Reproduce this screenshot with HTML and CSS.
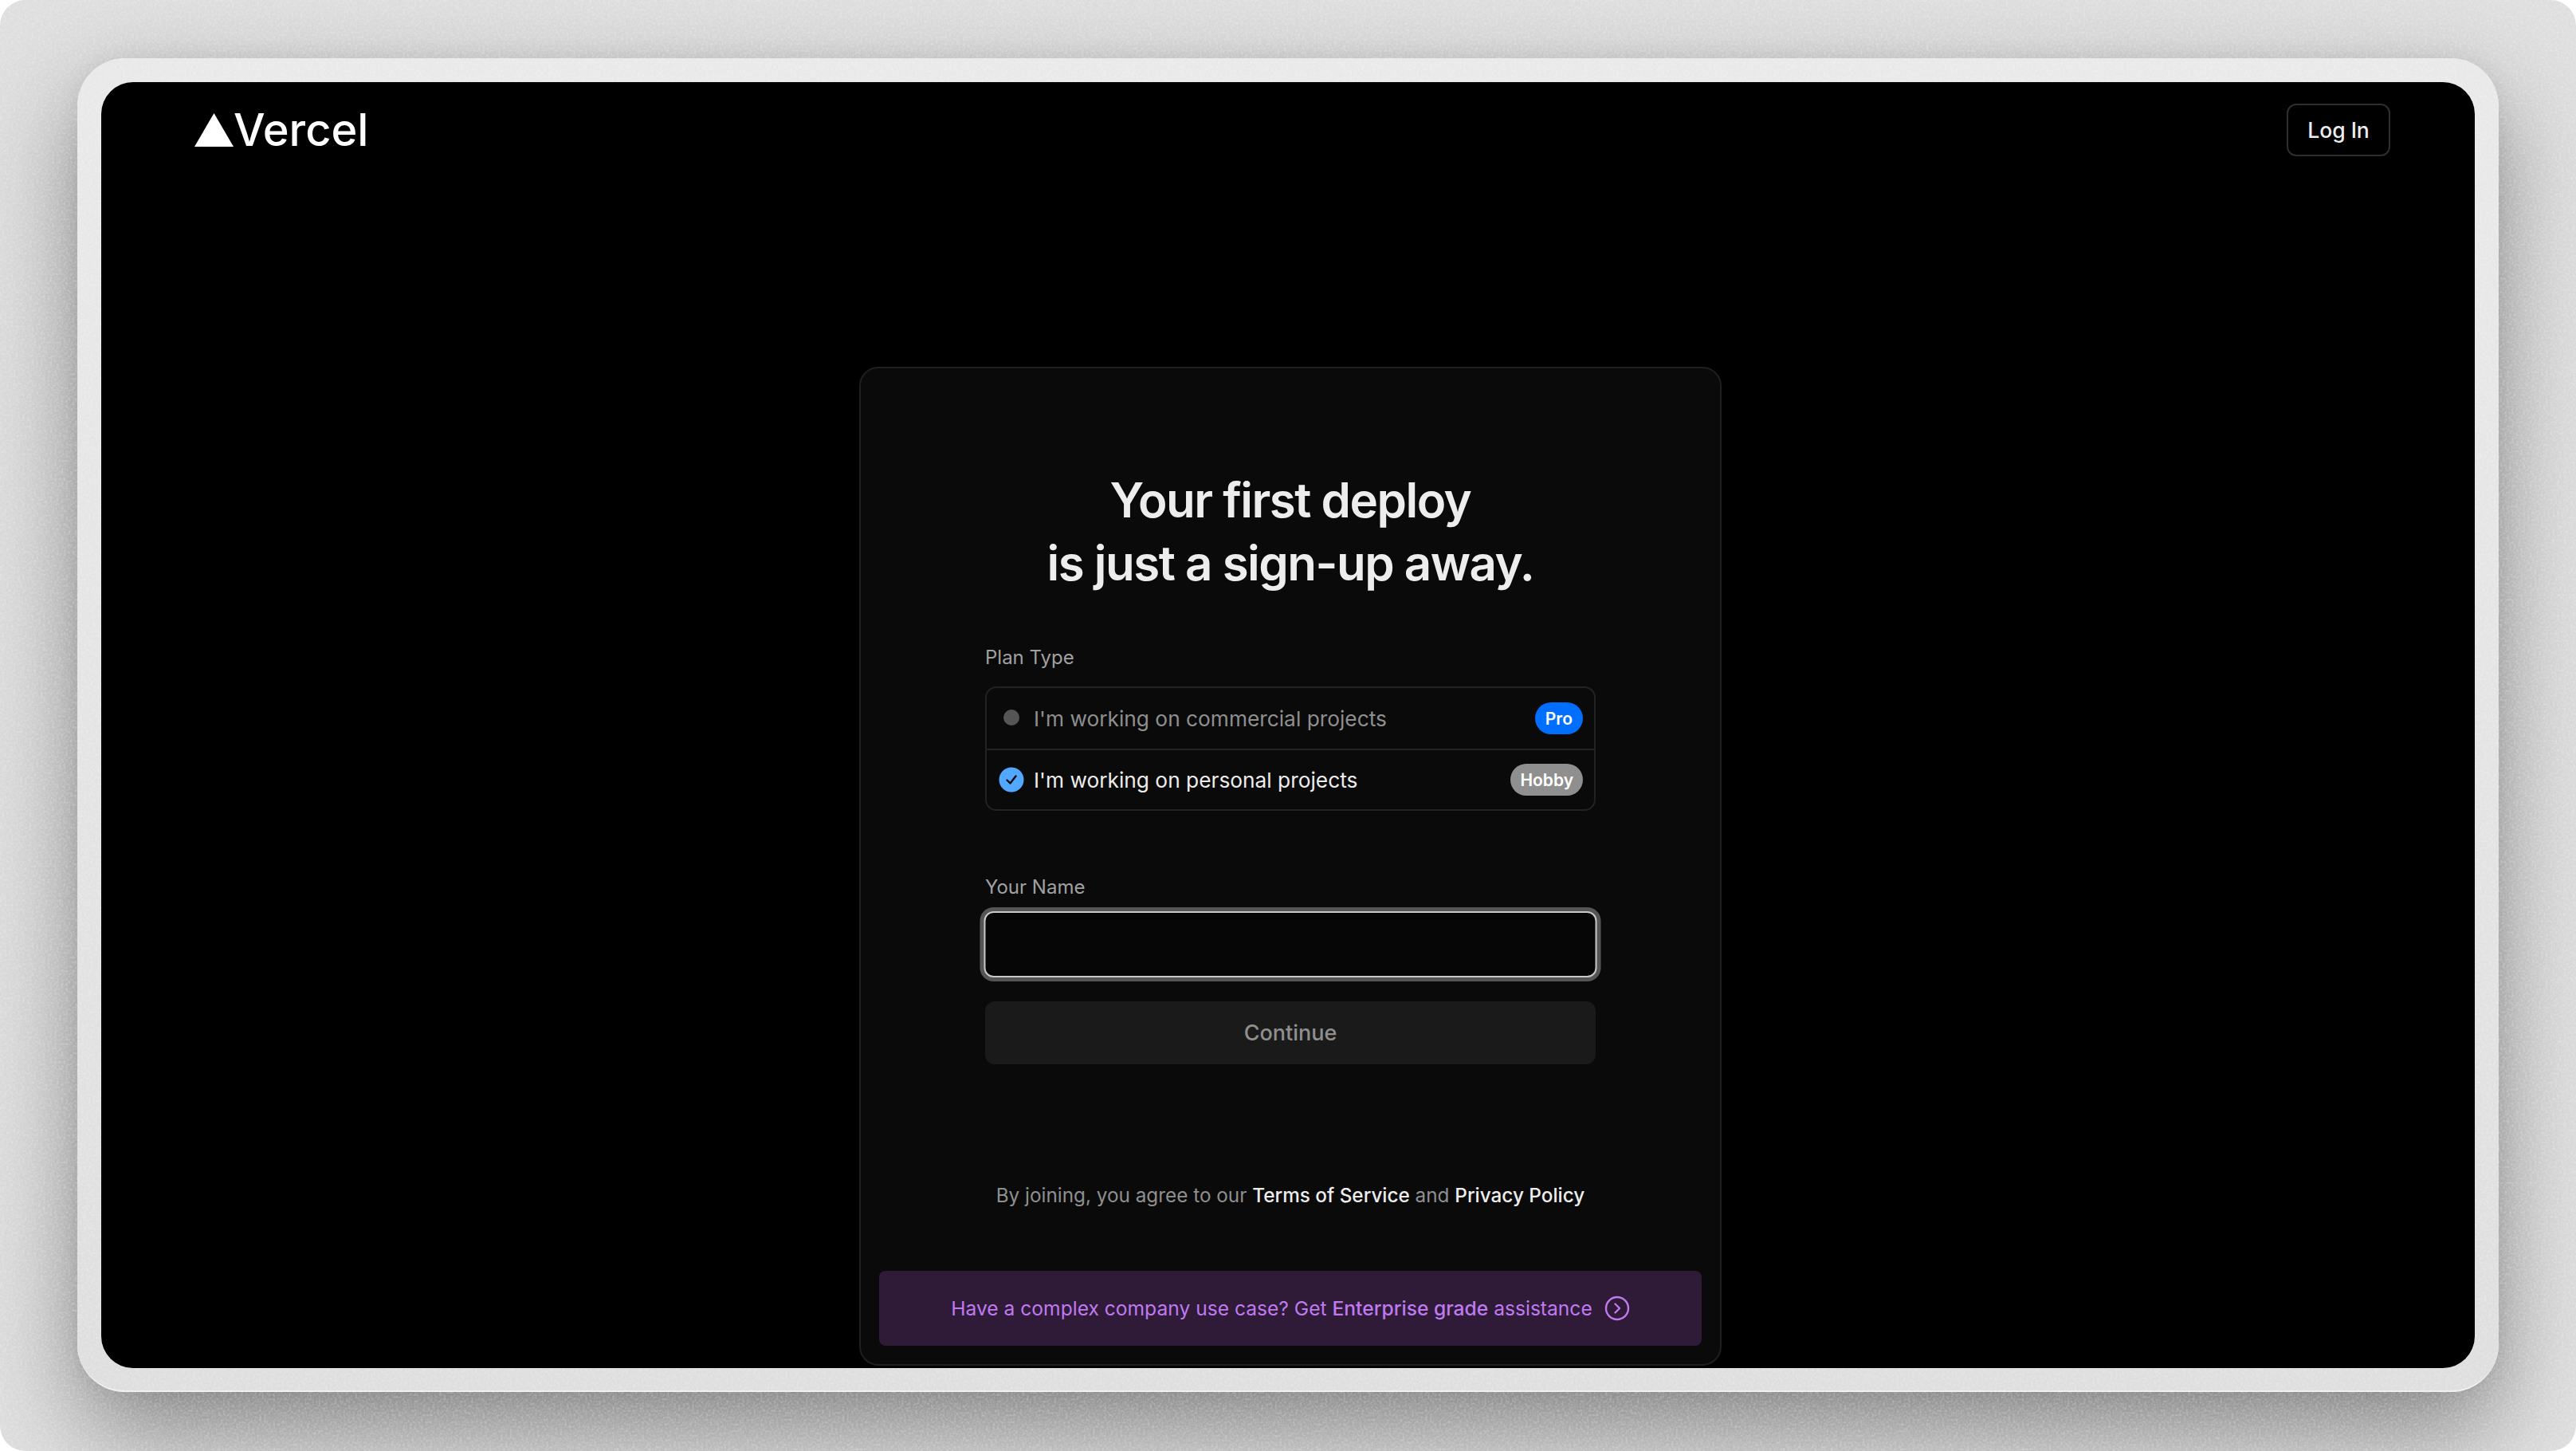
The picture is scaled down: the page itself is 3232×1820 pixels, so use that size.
FILE: index.html
```html
<!DOCTYPE html>
<html lang="en">
<head>
<meta charset="utf-8">
<title>Vercel Sign Up</title>
<link rel="stylesheet" href="styles.css">
</head>
<body>
<div class="stage">
  <svg class="grain" aria-hidden="true">
    <filter id="noise"><feTurbulence type="fractalNoise" baseFrequency="0.35" numOctaves="3" seed="4"/><feColorMatrix type="matrix" values="0 0 0 0 1  0 0 0 0 1  0 0 0 0 1  1.6 0 0 0 -0.62"/></filter>
    <rect width="100%" height="100%" filter="url(#noise)"/>
  </svg>
  <div class="frame">
    <div class="screen">
      <header class="topbar">
        <a class="brand">
          <svg class="brand-mark" viewBox="0 0 49 42"><polygon points="24.5,0 49,42 0,42" fill="#fff"/></svg>
          <span class="brand-name">Vercel</span>
        </a>
        <a class="login">Log In</a>
      </header>
      <main class="main">
        <section class="card">
          <h1 class="title">Your first deploy<br>is just a sign-up away.</h1>
          <div class="form">
            <div class="field-label plan-label">Plan Type</div>
            <div class="plans">
              <div class="plan plan-muted">
                <span class="plan-icon"><span class="dot"></span></span>
                <span class="plan-text">I'm working on commercial projects</span>
                <span class="badge badge-pro">Pro</span>
              </div>
              <div class="plan">
                <span class="plan-icon">
                  <svg class="check" viewBox="0 0 32 32"><circle cx="16" cy="16" r="15.5" fill="#52a8ff"/><path d="M10.5 16.5l4 4 7-9" fill="none" stroke="#0a0a0a" stroke-width="2.4" stroke-linecap="round" stroke-linejoin="round"/></svg>
                </span>
                <span class="plan-text">I'm working on personal projects</span>
                <span class="badge badge-hobby">Hobby</span>
              </div>
            </div>
            <label class="field-label name-label" for="name">Your Name</label>
            <input class="name-input" id="name" type="text">
            <button class="continue" type="button">Continue</button>
          </div>
          <p class="legal">By joining, you agree to our <a>Terms of Service</a> and <a>Privacy Policy</a></p>
          <div class="banner">
            <span>Have a complex company use case? Get <b>Enterprise grade</b> assistance</span>
            <svg class="banner-icon" viewBox="0 0 32 32"><circle cx="16" cy="16" r="14" fill="none" stroke="#bf7af0" stroke-width="2.4"/><path d="M13.5 10.5l5.5 5.5-5.5 5.5" fill="none" stroke="#bf7af0" stroke-width="2.4" stroke-linecap="round" stroke-linejoin="round"/></svg>
          </div>
        </section>
      </main>
    </div>
  </div>
</div>
</body>
</html>
```
FILE: styles.css
```css
* { box-sizing: border-box; }
html, body { margin: 0; height: 100%; background: #fff; }
body { font-family: Inter, "Liberation Sans", sans-serif; }
a { color: inherit; text-decoration: none; }

.stage {
  position: relative;
  isolation: isolate;
  width: 3232px;
  height: 1820px;
  padding: 73px 97px 74px 97px;
  border-radius: 32px;
  overflow: hidden;
  background: #dedede;
}
.grain {
  position: absolute;
  inset: 0;
  width: 100%;
  height: 100%;
  z-index: 1;
  opacity: .35;
  pointer-events: none;
}
.frame {
  height: 1673px;
  padding: 30px 30px 28px 30px;
  border-radius: 60px;
  background: linear-gradient(#e9e9e9, #dedede);
  border-bottom: 2px solid #efefef;
  box-shadow: 0 50px 120px rgba(0, 0, 0, .42), 0 0 30px rgba(0, 0, 0, .06);
}
.screen {
  position: relative;
  z-index: 2;
  height: 100%;
  border-radius: 40px;
  background: #000;
  overflow: hidden;
  display: flex;
  flex-direction: column;
}
.topbar {
  display: flex;
  justify-content: space-between;
  align-items: center;
  padding: 27px 106px 0 117px;
}
.brand { display: flex; align-items: center; color: #fff; }
.brand-mark { width: 49px; height: 42px; }
.brand-name {
  font-size: 56px;
  line-height: 66px;
  font-weight: 500;
}
.login {
  width: 130px;
  height: 66px;
  display: flex;
  align-items: center;
  justify-content: center;
  border: 2px solid #2e2e2e;
  border-radius: 12px;
  color: #ededed;
  font-size: 26.5px;
  font-weight: 500;
}
.main {
  display: flex;
  justify-content: center;
  padding: 264px 0 0 6px;
}
.card {
  width: 1082px;
  height: 1253px;
  padding: 0 23px;
  border: 2px solid #1f1f1f;
  border-radius: 24px;
  background: #0a0a0a;
  display: flex;
  flex-direction: column;
}
.title {
  margin: 126px 0 0;
  text-align: center;
  color: #ededed;
  font-size: 60px;
  line-height: 79px;
  font-weight: 600;
  letter-spacing: -1.5px;
}
.form {
  display: flex;
  flex-direction: column;
  padding: 0 133px;
}
.field-label {
  display: block;
  color: #a1a1a1;
  font-size: 24px;
  line-height: 30px;
}
.plan-label { margin-top: 64px; }
.name-label { margin-top: 81px; }
.plans {
  margin-top: 21px;
  border: 2px solid #222;
  border-radius: 14px;
}
.plan {
  height: 76px;
  display: flex;
  align-items: center;
  padding: 0 14px 0 15px;
  color: #ededed;
  font-size: 26.3px;
}
.plan + .plan { border-top: 2px solid #222; }
.plan-muted { color: #8f8f8f; }
.plan-icon {
  width: 32px;
  height: 32px;
  margin-right: 12px;
  display: flex;
  align-items: center;
  justify-content: center;
}
.dot { width: 20px; height: 20px; margin-top: -2px; border-radius: 50%; background: #555; }
.check { width: 32px; height: 32px; }
.plan-text { flex: 1; }
.badge {
  height: 40px;
  display: flex;
  align-items: center;
  padding: 0 12px;
  border-radius: 20px;
  color: #fff;
  font-size: 21px;
  font-weight: 600;
}
.badge-pro { background: #006efe; padding: 0 13px; }
.badge-hobby { background: #8f8f8f; }
.name-input {
  height: 83px;
  margin: 15px 0 0;
  padding: 0 20px;
  background: #060606;
  border: 2px solid #c9c9c9;
  border-radius: 12px;
  outline: none;
  box-shadow: 0 0 0 5px #555;
  width: 100%;
  transform: scale(1.004, 1);
}
.continue {
  height: 79px;
  margin-top: 30px;
  border: 0;
  border-radius: 12px;
  background: #1a1a1a;
  color: #8f8f8f;
  font-family: inherit;
  font-size: 27px;
  font-weight: 500;
}
.legal {
  margin: 149px 0 0;
  text-align: center;
  color: #8f8f8f;
  font-size: 24.3px;
  line-height: 30px;
}
.legal a { color: #ededed; font-weight: 500; }
.banner {
  height: 94px;
  margin-top: auto;
  margin-bottom: 23px;
  display: flex;
  align-items: center;
  justify-content: center;
  gap: 15px;
  border-radius: 8px;
  background: #2f1a38;
  color: #bf7af0;
  font-size: 24.6px;
}
.banner b { font-weight: 500; }
.banner-icon { width: 32px; height: 32px; }
```
